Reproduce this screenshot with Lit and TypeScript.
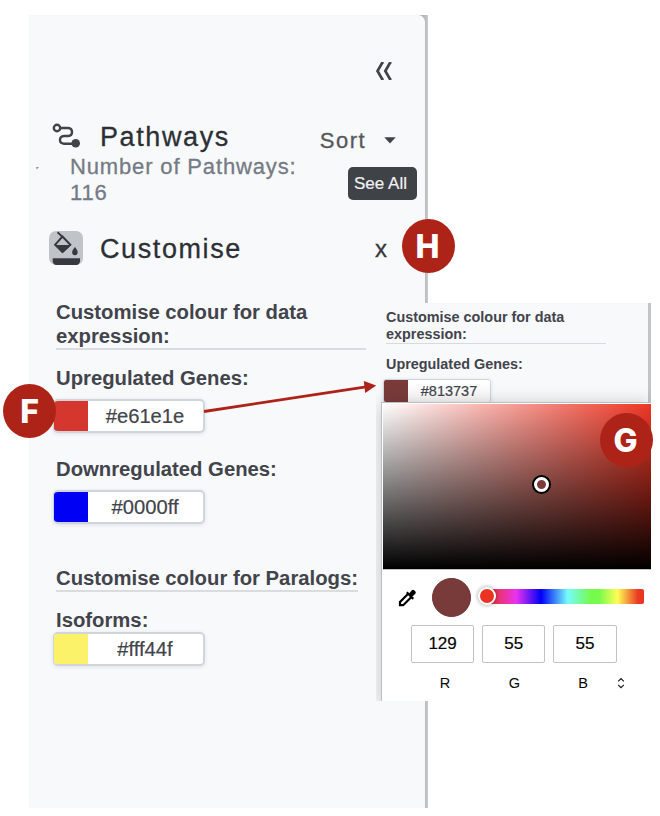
import { LitElement, html, css } from "lit";
import { customElement, property } from "lit/decorators.js";

@customElement("colour-field")
class ColourField extends LitElement {
  @property() swatch = "";
  @property() value = "";
  static styles = css`
    :host { display: block; }
    .field {
      display: flex; box-sizing: border-box; width: 152px; height: 34px; overflow: hidden;
      background: #fff; border: 2px solid #d0d4db; border-left-width: 1px; border-radius: 5px;
      box-shadow: 0 1px 4px rgba(60, 70, 90, 0.14);
    }
    .swatch { width: 34px; flex: none; }
    .value {
      flex: 1; text-align: center; color: #42444c; font-size: 20.2px; line-height: 31px;
      -webkit-text-stroke: 0.2px #42444c; padding-right: 1px;
    }
    :host([small]) .field { width: 108px; height: 24px; border-width: 1px; border-radius: 3px;
      background: linear-gradient(#fff, #f6f6f7); }
    :host([small]) .swatch { width: 24px; }
    :host([small]) .value { font-size: 14.5px; line-height: 23px; padding-right: 0; }
  `;
  render() {
    return html`<div class="field">
      <div class="swatch" style="background:${this.swatch}"></div>
      <div class="value">${this.value}</div>
    </div>`;
  }
}

@customElement("colour-picker")
class ColourPicker extends LitElement {
  static styles = css`
    :host { display: block; background: #fff; color: #050505; }
    .area {
      position: relative; height: 166px; box-sizing: border-box; border-bottom: 1px solid #c4c4c4;
      background: linear-gradient(to top, #000, transparent), linear-gradient(to right, #fff, #ee3625);
    }
    .marker {
      position: absolute; left: 151px; top: 73px; width: 9px; height: 9px; border-radius: 50%;
      background: #793b3a; border: 3px solid #fff; box-shadow: 0 0 0 2px #000;
    }
    .tools { display: flex; align-items: center; height: 55px; padding-left: 14px; }
    .dropper { display: block; width: 20px; height: 20px; }
    .current {
      box-sizing: border-box; width: 39px; height: 39px; margin-left: 15px; border-radius: 50%;
      background: #793b3a; border: 1px solid #6b3031;
    }
    .hue {
      position: relative; width: 156px; height: 15px; margin-left: 17px; margin-top: -2px; border-radius: 2px;
      background: linear-gradient(to right, #ea3323 0%, #ea34ef 18%, #0000f5 34%, #75fbfd 51%, #75fb4c 66%, #75fb4c 71%, #fffd55 83%, #ea3c24 96%, #ea3323 100%);
    }
    .thumb {
      position: absolute; left: -10px; top: -2px; width: 14px; height: 14px; border-radius: 50%;
      background: #ea3323; border: 2.5px solid #fff; box-shadow: 0 0 4px rgba(0, 0, 0, 0.4);
    }
    .channels { display: flex; gap: 8px; padding-left: 28px; }
    .channel { width: 63.2px; text-align: center; }
    .number {
      box-sizing: border-box; height: 38px; border: 1px solid #c2c2c2; border-radius: 2px;
      font-size: 17px; line-height: 36px; -webkit-text-stroke: 0.2px #050505;
    }
    .name { font-size: 14.5px; line-height: 20px; margin-top: 10px; padding-left: 5px; }
    .channel:nth-of-type(2) .name { padding-left: 1px; }
    .channel:nth-of-type(3) .name { padding-left: 0; padding-right: 4px; }
    .updown { display: block; width: 8px; height: 12px; margin: 52px 0 0 -8px; }
  `;
  render() {
    return html`
      <div class="area"><div class="marker"></div></div>
      <div class="tools">
        <svg class="dropper" viewBox="0 0 20 20">
          <path d="M11.200 5.800 3 14v3.200h3.200L14.400 9" fill="none" stroke="#000" stroke-width="2.200" />
          <path d="M9 5.100 10.600 3.500l1.700 1.700 2.600-2.900q1.200-1.100 2.500.1l.9.900q1.100 1.200 0 2.400l-2.900 2.700 1.700 1.700-1.600 1.600z" />
        </svg>
        <div class="current"></div>
        <div class="hue"><div class="thumb"></div></div>
      </div>
      <div class="channels">
        ${[["R", 129], ["G", 55], ["B", 55]].map(
          ([name, n]) => html`<div class="channel"><div class="number">${n}</div><div class="name">${name}</div></div>`
        )}
        <svg class="updown" viewBox="0 0 8 12" fill="none" stroke="#111" stroke-width="1.100">
          <path d="M1.200 4.400 4 1.600l2.800 2.800M1.200 7.800 4 10.600l2.800-2.800" />
        </svg>
      </div>
    `;
  }
}

@customElement("app-root")
class AppRoot extends LitElement {
  static styles = css`
    :host {
      display: block; position: relative; width: 660px; height: 816px; overflow: hidden;
      background: #fff; font-family: "Liberation Sans", Arial, sans-serif;
    }
    .frame {
      position: absolute; left: 29px; top: 15px; width: 399px; height: 793px;
      background: linear-gradient(to right, #b4b5b7 395px, #cacbcc 399px);
    }
    .panel {
      box-sizing: border-box; width: 396px; height: 793px; padding: 47px 0 0 24px;
      background: #f8f9fb; border-radius: 0 7px 0 0; position: relative;
    }
    .collapse { display: block; width: 18px; height: 18px; margin-left: 322px; }
    .row { display: flex; }
    .title {
      font-size: 27px; line-height: 32px; letter-spacing: 1.6px; color: #2c3035; white-space: nowrap;
      -webkit-text-stroke: 0.3px #2c3035;
    }
    .pathways { margin-top: 41px; height: 32px; }
    .route { width: 30px; height: 28px; margin: 1px 18px 0 -1px; }
    .sort {
      width: 51px; margin: 3px 0 0 90px; color: #55585c; font-size: 22px; line-height: 33px; letter-spacing: 1.5px;
      -webkit-text-stroke: 0.3px #55585c;
    }
    .caret { width: 12px; height: 7px; margin: 16px 0 0 13px; }
    .summary { height: 78px; }
    .count {
      width: 240px; margin-left: 17px; padding-top: 1px; color: #747b84; font-size: 22px; line-height: 25.5px;
      letter-spacing: 0.85px; -webkit-text-stroke: 0.3px #747b84;
    }
    .all {
      box-sizing: border-box; width: 69px; height: 33px; margin: 14px 0 0 38px; border-radius: 5px; background: #3f4247;
      color: #f1f1f2; text-align: center; font-size: 17px; line-height: 33px; padding-right: 4px; white-space: nowrap;
      -webkit-text-stroke: 0.2px #f1f1f2;
    }
    .custom { height: 34px; align-items: flex-start; }
    .bucket { width: 34px; height: 34px; margin: 0 17px 0 -4px; }
    .custom .title { width: 141px; margin-top: 2px; }
    .close {
      margin: 5px 0 0 134px; font-size: 24px; line-height: 26px; color: #35383c; -webkit-text-stroke: 0.3px #35383c;
    }
    .tick { position: absolute; left: 7px; top: 152px; width: 3px; height: 3px; }
    .heading, .label {
      margin-left: 3px; color: #42444c; font-weight: bold; font-size: 20.3px; line-height: 24px;
    }
    .heading { margin-top: 35px; width: 310px; border-bottom: 2px solid #dadce0; }
    .heading.paralogs { margin-top: 42px; width: 302px; white-space: nowrap; }
    .label.up { margin-top: 16px; }
    .label.down { margin-top: 24px; }
    .label.iso { margin-top: 16px; }
    .gap { margin-top: 9px; }
    .inset {
      position: absolute; left: 376px; top: 303px; width: 275px; height: 398px; overflow: hidden;
      background: #f8f9fb;
    }
    .inset-top {
      box-sizing: border-box; height: 101px; padding: 6px 0 0 10px; border-right: 3px solid #c4c5c6;
    }
    .inset .heading, .inset .label { margin-left: 0; font-size: 14.4px; line-height: 17px; }
    .inset .heading { margin-top: 0; width: 220px; border-bottom: 1px solid #d9dadd; }
    .inset .label { margin-top: 12px; }
    .inset colour-field { margin: 6px 0 0 -3px; }
    .pop {
      margin-left: 6px; margin-top: -1px; position: relative; border-left: 1px solid #fff; border-top: 1px solid #fff;
      height: 300px; background: #fff; box-shadow: 0 0 0 1px #bcbec0, 0 2px 18px rgba(0, 0, 0, 0.24);
    }
    .arrow { position: absolute; left: 200px; top: 375px; width: 180px; height: 45px; }
    .badge {
      position: absolute; width: 53px; height: 54px; border-radius: 50%; background: #ae2318; color: #fff;
      text-align: center; font: 800 32px/55px Inter, sans-serif; box-sizing: border-box; padding-right: 2px;
    }
    .f { left: 3px; top: 384px; padding-right: 0; }
    .g { left: 600px; top: 413px; }
    .h { left: 402px; top: 219px; }
  `;
  render() {
    return html`
      <div class="frame">
        <div class="panel">
          <svg class="collapse" viewBox="0 0 18 18" fill="none" stroke="#404347" stroke-width="2.700">
            <path d="M8.700 .5H7.400L2.500 9l4.900 8.500h1.300M16.500 .5H15.200L10.300 9l4.900 8.500h1.300" />
          </svg>
          <div class="row pathways">
            <svg class="route" viewBox="0 0 30 28" fill="none" stroke="#404347" stroke-width="2.400">
              <circle cx="5" cy="6" r="3.200" />
              <path d="M8.500 6h7.700q3.700.2 3.800 4t-3.800 4H12q-3.900.3-4 3.900t4 3.800h10" />
              <circle cx="23.700" cy="21.300" r="4.300" fill="#404347" stroke="none" />
            </svg>
            <div class="title">Pathways</div>
            <div class="sort">Sort</div>
            <svg class="caret" viewBox="0 0 12 7"><path d="M.3.3h11.400L6 6.500z" fill="#404347" /></svg>
          </div>
          <div class="row summary">
            <div class="count">Number of Pathways:<br />116</div>
            <div class="all">See All</div>
          </div>
          <div class="row custom">
            <svg class="bucket" viewBox="0 0 34 34">
              <rect width="34" height="34" rx="7" fill="#c0c4c8" />
              <path d="M3.700 27.300h27.300v3q-.4 3.700-4 3.700H7.700q-3.600 0-4-3.700z" fill="#363a40" />
              <path d="M8.600 1.200l4.800 4.700M13.500 5.500 6.200 13.700l7.300 7.100 7.800-7.100z" fill="none" stroke="#363a40" stroke-width="2" />
              <path d="M5.400 14h16.800l-8.700 8.200z" fill="#363a40" />
              <path d="M25.900 16q3.100 3.800 2.800 5.700-.4 2.500-2.800 2.500t-2.800-2.500q-.2-1.900 2.800-5.700z" fill="#363a40" />
            </svg>
            <div class="title">Customise</div>
            <div class="close">x</div>
          </div>
          <svg class="tick" viewBox="0 0 3 3"><path d="M0 0h3L.8 2.500z" fill="#8f9195" /></svg>
          <div class="heading">Customise colour for data expression:</div>
          <div class="label up">Upregulated Genes:</div>
          <colour-field class="gap" swatch="#d5372f" value="#e61e1e"></colour-field>
          <div class="label down">Downregulated Genes:</div>
          <colour-field class="gap" swatch="#0000f5" value="#0000ff"></colour-field>
          <div class="heading paralogs">Customise colour for Paralogs:</div>
          <div class="label iso">Isoforms:</div>
          <colour-field swatch="#fbf26a" value="#fff44f"></colour-field>
        </div>
      </div>
      <div class="inset">
        <div class="inset-top">
          <div class="heading">Customise colour for data expression:</div>
          <div class="label">Upregulated Genes:</div>
          <colour-field small swatch="#793b3a" value="#813737"></colour-field>
        </div>
        <div class="pop"><colour-picker></colour-picker></div>
      </div>
      <svg class="arrow" viewBox="0 0 180 45">
        <path d="M4 36.500 166 11.900" stroke="#ae2318" stroke-width="2.800" />
        <path d="M163.800 6 176.200 10.600 165.200 18z" fill="#ae2318" />
      </svg>
      <div class="badge f">F</div>
      <div class="badge g">G</div>
      <div class="badge h">H</div>
    `;
  }
}
